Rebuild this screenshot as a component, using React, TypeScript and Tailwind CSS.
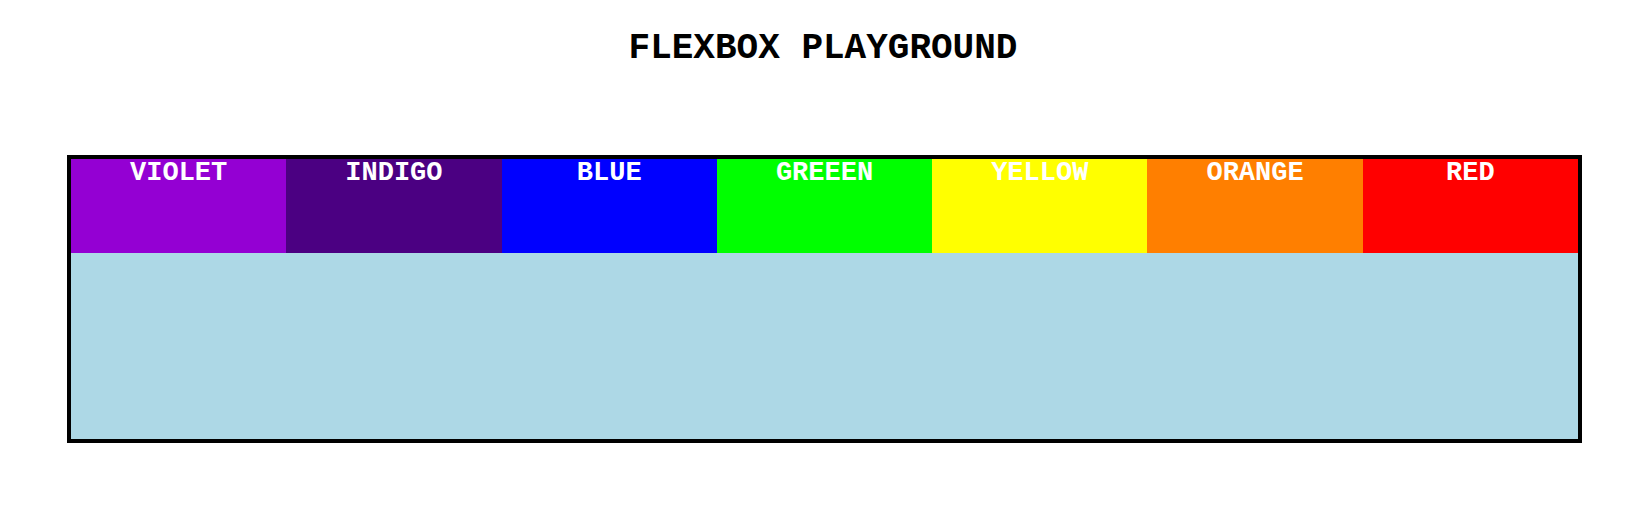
const colors = [
  { name: "VIOLET", bg: "bg-[#9400d3]" },
  { name: "INDIGO", bg: "bg-[#4b0082]" },
  { name: "BLUE", bg: "bg-[#0000ff]" },
  { name: "GREEEN", bg: "bg-[#00ff00]" },
  { name: "YELLOW", bg: "bg-[#ffff00]" },
  { name: "ORANGE", bg: "bg-[#ff7f00]" },
  { name: "RED", bg: "bg-[#ff0000]" },
];

export default function App() {
  return (
    <div className="min-h-screen bg-white font-['Liberation_Mono','Courier_New',monospace]">
      <h1 className="pt-[28px] text-center text-[36px] font-bold leading-[41px] text-black">
        FLEXBOX PLAYGROUND
      </h1>
      <div className="ml-[67px] mt-[86px] h-[288px] w-[1515px] border-4 border-black bg-[#add8e6]">
        <div className="flex">
          {colors.map((c) => (
            <div
              key={c.name}
              className={`flex-1 h-[94px] text-center text-[27px] font-bold leading-[28px] text-white ${c.bg}`}
            >
              {c.name}
            </div>
          ))}
        </div>
      </div>
    </div>
  );
}
